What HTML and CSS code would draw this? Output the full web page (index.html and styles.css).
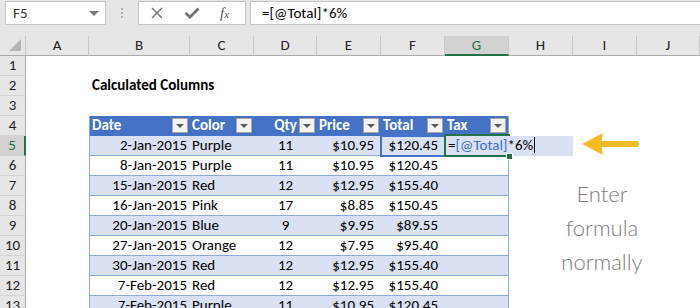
FILE: index.html
```html
<!DOCTYPE html>
<html lang="en">
<head>
    <meta charset="UTF-8">
    <meta name="viewport" content="width=device-width, initial-scale=1.0">
    <title>Calculated Columns</title>
    <link rel="stylesheet" href="styles.css">
</head>
<body>
    <div class="formula-bar">
        <div class="name-box">F5 <span class="caret"></span></div>
        <div class="grip"><i></i><i></i><i></i></div>
        <div class="fx-buttons">
            <svg class="btn-x" width="12" height="12" viewBox="0 0 12 12"><path d="M1 1 L11 11 M11 1 L1 11" stroke="#707070" stroke-width="1.4" fill="none"/></svg>
            <svg class="btn-ok" width="16" height="12" viewBox="0 0 16 12"><path d="M1.5 6 L6 10 L14.5 1.5" stroke="#707070" stroke-width="2.8" fill="none"/></svg>
            <span class="fx">f<small>x</small></span>
        </div>
        <div class="formula-input">=[@Total]*6%</div>
    </div>

    <div id="sheet" class="sheet"></div>

    <svg class="arrow" width="64" height="30" viewBox="0 0 64 30">
        <path d="M4 14 L25 3 Q22 14 25 25 Z" fill="#f5bb22"/>
        <line x1="22" y1="14" x2="58" y2="14" stroke="#f5bb22" stroke-width="6" stroke-linecap="round"/>
    </svg>
    <div class="note">Enter<br>formula<br>normally</div>

    <script>
        const letters = ['A', 'B', 'C', 'D', 'E', 'F', 'G', 'H', 'I', 'J'];
        const heads = ['Date', 'Color', 'Qty', 'Price', 'Total', 'Tax'];
        const aligns = ['al-r', 'al-l', 'al-c', 'al-r cur', 'al-r cur', 'al-l'];
        const data = [
            ['2-Jan-2015', 'Purple', '11', '$10.95', '$120.45'],
            ['8-Jan-2015', 'Purple', '11', '$10.95', '$120.45'],
            ['15-Jan-2015', 'Red', '12', '$12.95', '$155.40'],
            ['16-Jan-2015', 'Pink', '17', '$8.85', '$150.45'],
            ['20-Jan-2015', 'Blue', '9', '$9.95', '$89.55'],
            ['27-Jan-2015', 'Orange', '12', '$7.95', '$95.40'],
            ['30-Jan-2015', 'Red', '12', '$12.95', '$155.40'],
            ['7-Feb-2015', 'Red', '12', '$12.95', '$155.40'],
            ['7-Feb-2015', 'Purple', '11', '$10.95', '$120.45']
        ];
        const sheet = document.getElementById('sheet');

        function cell(cls, text) {
            const d = document.createElement('div');
            d.className = 'c ' + cls;
            if (text) d.textContent = text;
            return d;
        }

        // column letters
        const headRow = document.createElement('div');
        headRow.className = 'row col-head';
        headRow.appendChild(cell('corner'));
        letters.forEach(l => headRow.appendChild(cell('hd' + (l === 'G' ? ' sel' : ''), l)));
        sheet.appendChild(headRow);

        for (let r = 1; r <= 13; r++) {
            const row = document.createElement('div');
            row.className = 'row';
            row.appendChild(cell('rh' + (r === 5 ? ' sel' : ''), String(r)));
            for (let i = 0; i < 10; i++) {
                const t = i - 1; // index into table columns (B..G)
                let c;
                if (r === 2 && i === 1) {
                    c = cell('title', 'Calculated Columns');
                } else if (r === 4 && t >= 0 && t < 6) {
                    c = cell('th ' + (t === 2 ? 'al-c' : 'al-l'), heads[t]);
                    const btn = document.createElement('span');
                    btn.className = 'filter';
                    c.appendChild(btn);
                } else if (r >= 5 && t >= 0 && t < 6) {
                    const v = data[r - 5][t] || '';
                    c = cell('tb ' + aligns[t] + (r % 2 ? ' band' : ''), v);
                } else {
                    c = cell('');
                }
                if (r >= 4 && t === 0) c.classList.add('first');
                if (r >= 4 && t === 5) c.classList.add('last');
                row.appendChild(c);
            }
            sheet.appendChild(row);
        }

        // F5 reference highlight and G5 in edit mode
        const rowFive = sheet.children[5];
        const f5 = rowFive.children[6];
        const ref = document.createElement('span');
        ref.className = 'ref-box';
        f5.classList.add('holder');
        f5.appendChild(ref);

        const g5 = rowFive.children[7];
        g5.classList.add('holder', 'editing');
        g5.innerHTML = '<div class="editor">=<span class="ref">[@Total]</span>*6%<span class="cursor"></span></div>' +
            '<span class="frame"></span><span class="fill-handle"></span>';
    </script>
</body>
</html>
```

FILE: styles.css
```css
body {
    margin: 0;
    width: 700px;
    height: 308px;
    overflow: hidden;
    position: relative;
    font-family: Carlito, Lato, "Liberation Sans", sans-serif;
    font-size: 15px;
    color: #000;
    background-color: #fff;
}

/* formula bar */
.formula-bar {
    display: flex;
    align-items: flex-start;
    height: 36px;
    padding-top: 1px;
    box-sizing: border-box;
    background-color: #e6e6e6;
}
.name-box {
    margin-left: 5px;
    width: 101px;
    height: 24px;
    box-sizing: border-box;
    display: flex;
    align-items: center;
    justify-content: space-between;
    padding: 0 6px 0 7px;
    background-color: #fff;
    border: 1px solid #c6c6c6;
    color: #333;
}
.caret {
    border-left: 5px solid transparent;
    border-right: 5px solid transparent;
    border-top: 5px solid #7a7a7a;
}
.grip {
    width: 32px;
    height: 24px;
    display: flex;
    flex-direction: column;
    align-items: center;
    justify-content: center;
    gap: 2px;
}
.grip i {
    width: 2px;
    height: 2px;
    background-color: #b0b0b0;
}
.fx-buttons {
    width: 108px;
    height: 24px;
    box-sizing: border-box;
    display: flex;
    align-items: center;
    padding-left: 12px;
    background-color: #fff;
    border: 1px solid #c6c6c6;
}
.btn-ok {
    margin-left: 21px;
}
.fx {
    margin-left: 20px;
    font-family: "Liberation Serif", serif;
    font-style: italic;
    font-size: 15px;
    color: #555;
}
.fx small {
    font-size: 11px;
}
.formula-input {
    flex: 1;
    margin-left: 4px;
    height: 24px;
    box-sizing: border-box;
    padding-left: 11px;
    line-height: 22px;
    background-color: #fff;
    border: 1px solid #c6c6c6;
    border-right: none;
}

/* grid */
.row {
    display: grid;
    grid-template-columns: 26px 63px 101px 64px 63px 64px 64px 64px 64px 64px 63px;
    height: 20px;
}
.c {
    height: 20px;
    box-sizing: border-box;
    line-height: 19px;
    padding: 0 3px;
    white-space: nowrap;
    overflow: hidden;
}
.col-head .c {
    background-color: #e6e6e6;
    border-bottom: 1px solid #ababab;
    border-right: 1px solid #c8c8c8;
    text-align: center;
    color: #222;
}
.col-head .sel {
    background-color: #d2d2d2;
    border-bottom: 2px solid #217346;
    color: #217346;
}
.corner {
    position: relative;
}
.corner::after {
    content: "";
    position: absolute;
    right: 4px;
    bottom: 4px;
    border-left: 12px solid transparent;
    border-bottom: 12px solid #b5b5b5;
}
.rh {
    background-color: #e6e6e6;
    border-right: 1px solid #ababab;
    border-bottom: 1px solid #d4d4d4;
    text-align: center;
    color: #222;
    padding: 0;
}
.rh.sel {
    background-color: #d2d2d2;
    border-right: 2px solid #217346;
    color: #217346;
}

.title {
    font-weight: bold;
    overflow: visible;
}

/* table */
.th {
    position: relative;
    background-color: #4472c4;
    color: #fff;
    font-weight: bold;
}
.filter {
    position: absolute;
    right: 2px;
    top: 2px;
    width: 16px;
    height: 15px;
    box-sizing: border-box;
    background-color: #f3f3f3;
    border: 1px solid #a6a6a6;
}
.filter::after {
    content: "";
    position: absolute;
    left: 3px;
    top: 5px;
    border-left: 4px solid transparent;
    border-right: 4px solid transparent;
    border-top: 4px solid #5a5a5a;
}
.tb {
    border-bottom: 1px solid #8ea9db;
}
.band {
    background-color: #d9e1f2;
}
.first {
    border-left: 1px solid #8ea9db;
}
.last {
    border-right: 1px solid #8ea9db;
}
.al-r {
    text-align: right;
}
.al-l {
    text-align: left;
    padding-left: 2px;
}
.al-c {
    text-align: center;
}
.cur {
    padding-right: 7px;
}

/* selection, reference and edit mode */
.holder {
    position: relative;
    overflow: visible;
}
.ref-box {
    position: absolute;
    left: -1px;
    top: -1px;
    width: 66px;
    height: 22px;
    box-sizing: border-box;
    border: 2px solid #4472c4;
}
.editor {
    position: absolute;
    left: 0;
    top: 0;
    width: 128px;
    height: 20px;
    padding-left: 3px;
    box-sizing: border-box;
    background-color: #dae1f2;
    line-height: 19px;
    z-index: 1;
}
.editor .ref {
    color: #3f6fc6;
}
.cursor {
    display: inline-block;
    width: 1px;
    height: 16px;
    margin-left: 1px;
    vertical-align: -3px;
    background-color: #000;
}
.frame {
    position: absolute;
    left: -1px;
    top: -2px;
    width: 66px;
    height: 23px;
    box-sizing: border-box;
    border: 2px solid #217346;
    border-right: none;
    z-index: 2;
}
.fill-handle {
    position: absolute;
    left: 61px;
    top: 17px;
    width: 5px;
    height: 5px;
    background-color: #217346;
    border: 1px solid #fff;
    z-index: 3;
}

/* annotation */
.arrow {
    position: absolute;
    left: 578px;
    top: 130px;
}
.note {
    position: absolute;
    left: 542px;
    top: 177px;
    width: 120px;
    text-align: center;
    font-family: Lato, sans-serif;
    font-weight: 300;
    font-size: 22px;
    line-height: 34px;
    color: #7d7d7d;
}
```
